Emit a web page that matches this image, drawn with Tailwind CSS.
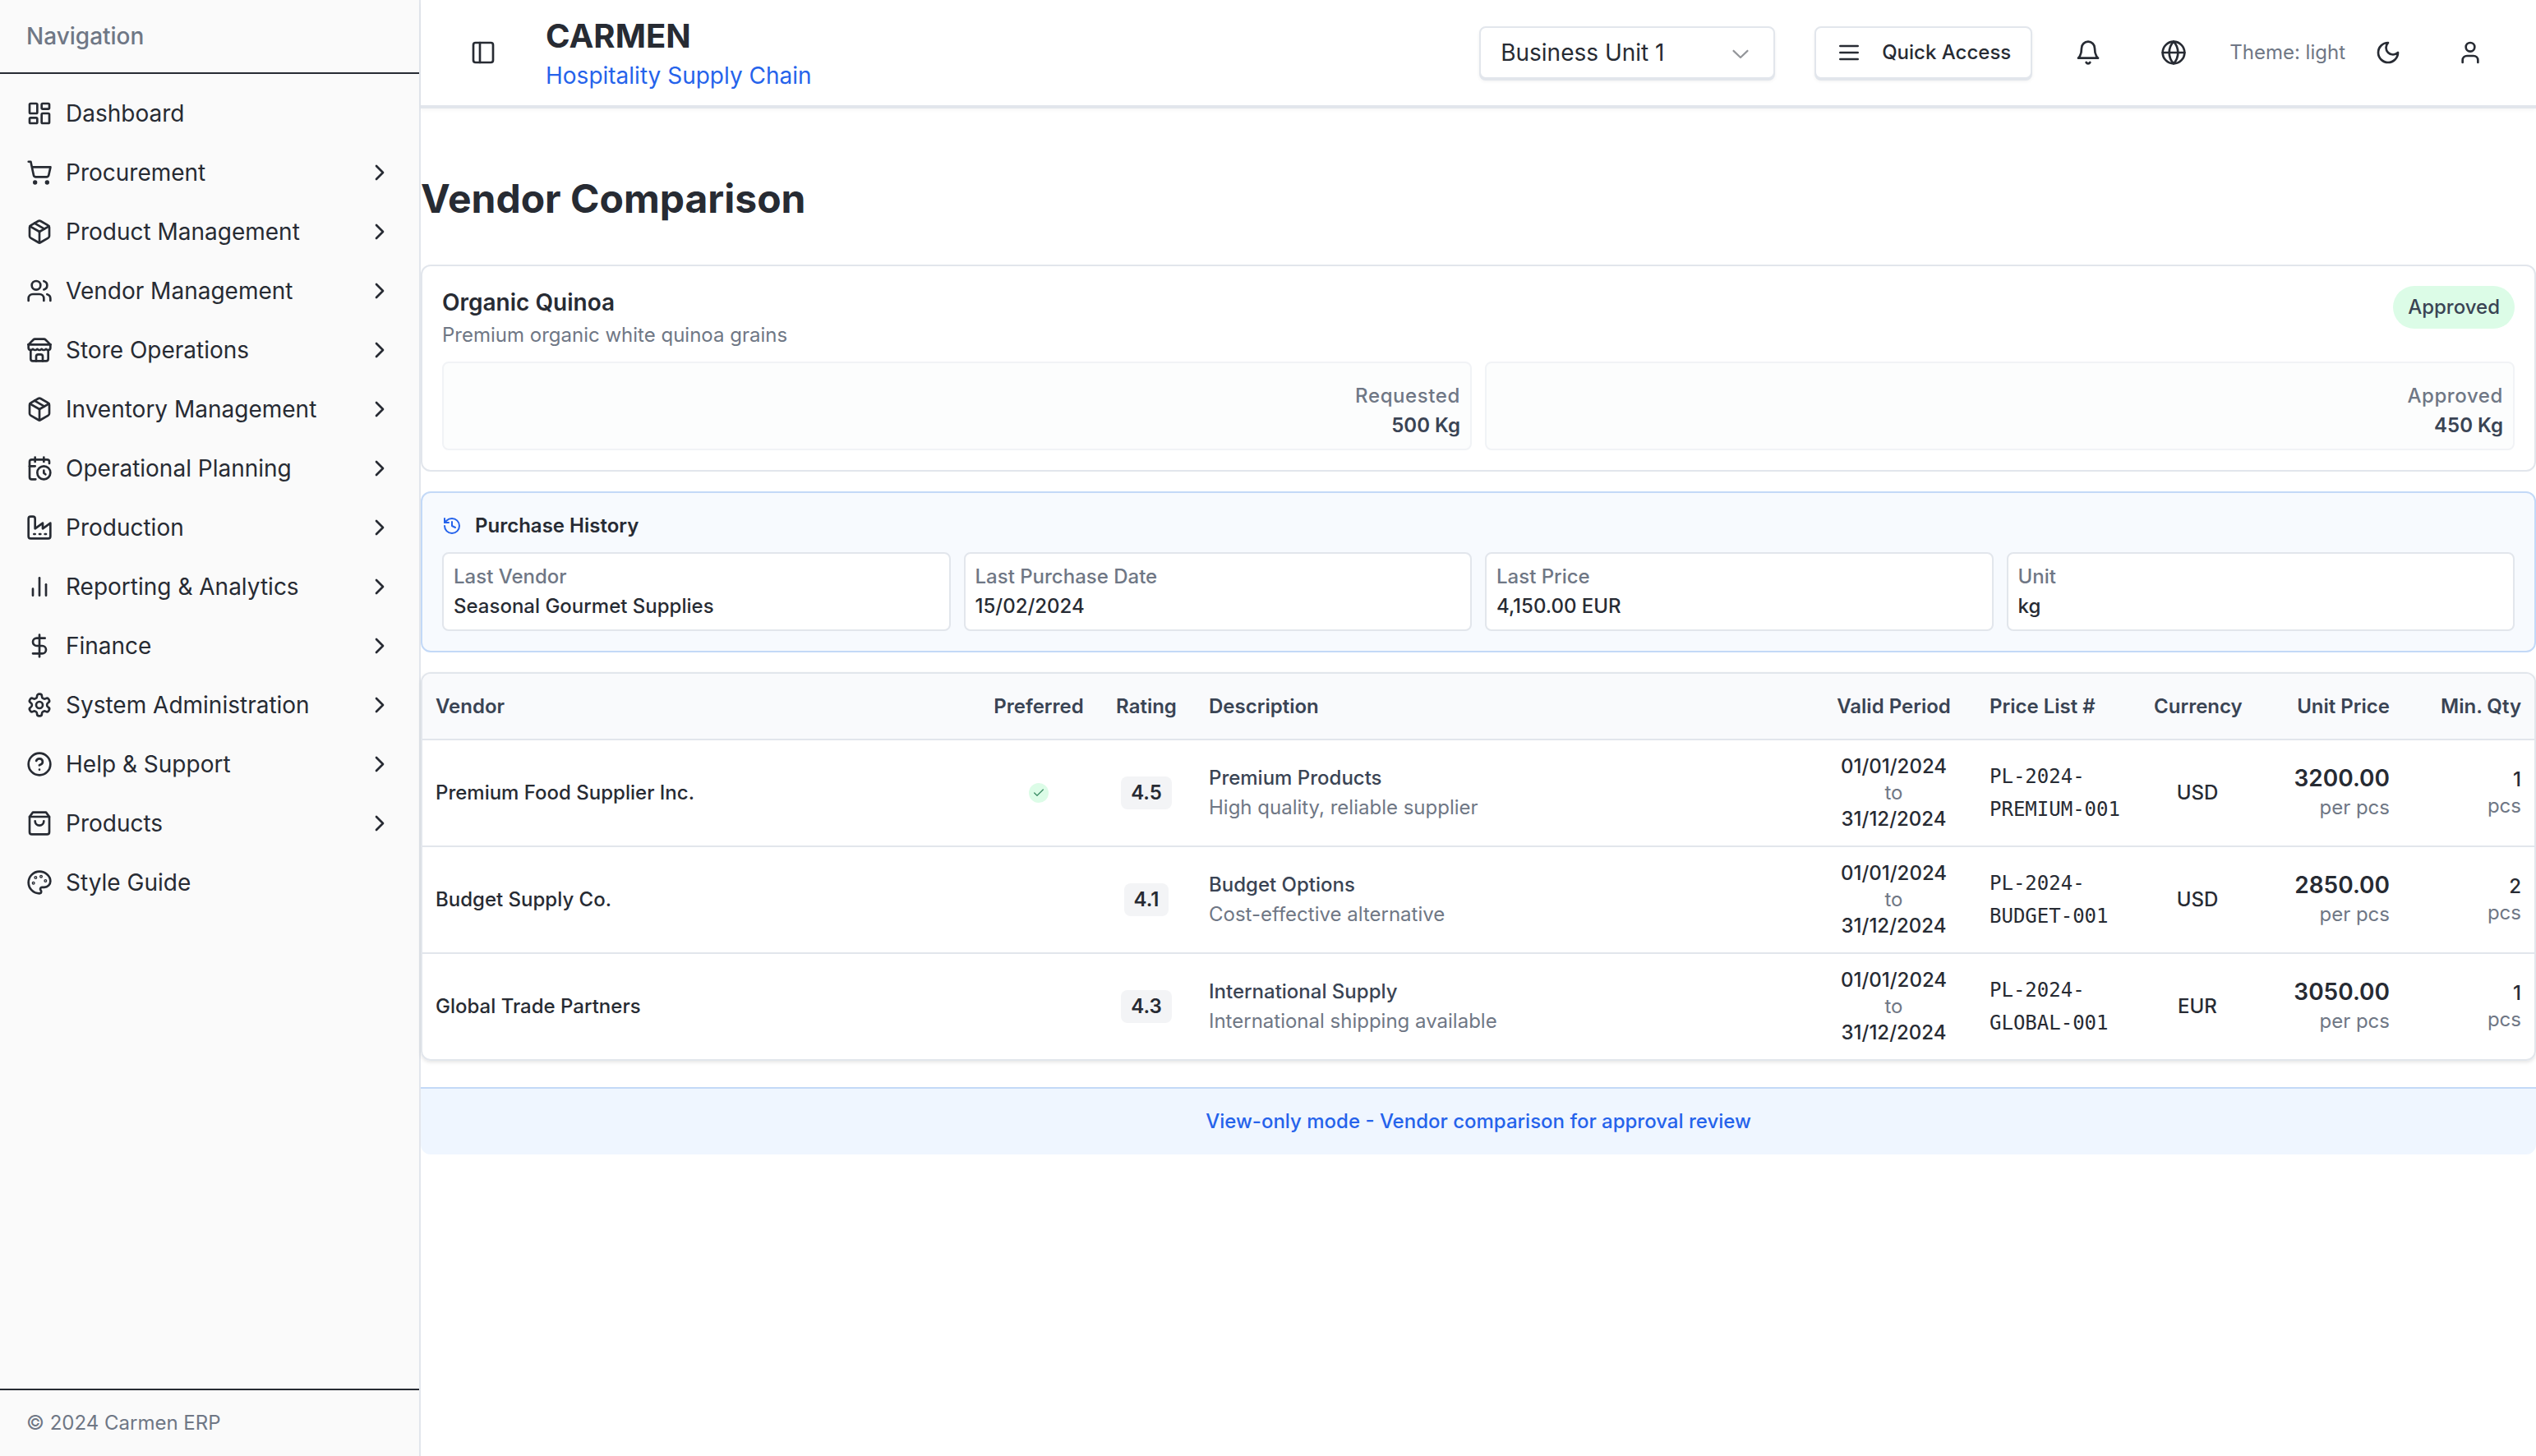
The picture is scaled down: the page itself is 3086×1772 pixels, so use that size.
<!DOCTYPE html>
<html lang="en">
<head>
<meta charset="utf-8">
<meta name="viewport" content="width=device-width, initial-scale=1">
<title>Carmen - Vendor Comparison</title>
<script src="https://cdn.jsdelivr.net/npm/@tailwindcss/browser@4"></script>
</head>
<body class="flex min-h-screen bg-white font-['Inter',sans-serif] text-[24px] leading-8 text-[#272b33] antialiased">
<svg class="hidden" aria-hidden="true">
  <symbol id="chevron" viewBox="0 0 24 24"><path d="m9 18 6-6-6-6"/></symbol>
  <symbol id="package" viewBox="0 0 24 24"><path d="m7.5 4.27 9 5.15"/><path d="M21 8a2 2 0 0 0-1-1.73l-7-4a2 2 0 0 0-2 0l-7 4A2 2 0 0 0 3 8v8a2 2 0 0 0 1 1.73l7 4a2 2 0 0 0 2 0l7-4A2 2 0 0 0 21 16Z"/><path d="m3.3 7 8.7 5 8.7-5"/><path d="M12 22V12"/></symbol>
</svg>

<aside class="flex w-[512px] shrink-0 flex-col border-r-2 border-[#e2e6ec] bg-[#fafafa] [&_svg]:size-8 [&_svg]:shrink-0 [&_svg]:fill-none [&_svg]:stroke-current [&_svg]:stroke-2">
  <div class="flex h-[90px] items-center border-b-2 border-[#272b33] px-8">
    <h2 class="text-[28px] font-medium text-[#6f7785]">Navigation</h2>
  </div>
  <nav aria-label="Main" class="grow pt-3 text-[28px] [&_a]:flex [&_a]:h-[72px] [&_a]:items-center [&_a]:gap-4 [&_a]:px-8 [&_span]:grow [&_svg]:[stroke-linecap:round] [&_svg]:[stroke-linejoin:round]">
    <a href="#"><svg viewBox="0 0 24 24"><rect width="7" height="9" x="3" y="3" rx="1"/><rect width="7" height="5" x="14" y="3" rx="1"/><rect width="7" height="9" x="14" y="12" rx="1"/><rect width="7" height="5" x="3" y="16" rx="1"/></svg><span>Dashboard</span></a>
    <a href="#"><svg viewBox="0 0 24 24"><circle cx="8" cy="21" r="1"/><circle cx="19" cy="21" r="1"/><path d="M2.05 2.05h2l2.66 12.42a2 2 0 0 0 2 1.58h9.78a2 2 0 0 0 1.95-1.57l1.65-7.43H5.12"/></svg><span>Procurement</span><svg><use href="#chevron"/></svg></a>
    <a href="#"><svg><use href="#package"/></svg><span>Product Management</span><svg><use href="#chevron"/></svg></a>
    <a href="#"><svg viewBox="0 0 24 24"><path d="M16 21v-2a4 4 0 0 0-4-4H6a4 4 0 0 0-4 4v2"/><circle cx="9" cy="7" r="4"/><path d="M22 21v-2a4 4 0 0 0-3-3.87"/><path d="M16 3.13a4 4 0 0 1 0 7.75"/></svg><span>Vendor Management</span><svg><use href="#chevron"/></svg></a>
    <a href="#"><svg viewBox="0 0 24 24"><path d="m2 7 4.41-4.41A2 2 0 0 1 7.83 2h8.34a2 2 0 0 1 1.42.59L22 7"/><path d="M4 12v8a2 2 0 0 0 2 2h12a2 2 0 0 0 2-2v-8"/><path d="M15 22v-4a2 2 0 0 0-2-2h-2a2 2 0 0 0-2 2v4"/><path d="M2 7h20"/><path d="M22 7v3a2 2 0 0 1-2 2a2.7 2.7 0 0 1-1.59-.63.7.7 0 0 0-.82 0A2.7 2.7 0 0 1 16 12a2.7 2.7 0 0 1-1.59-.63.7.7 0 0 0-.82 0A2.7 2.7 0 0 1 12 12a2.7 2.7 0 0 1-1.59-.63.7.7 0 0 0-.82 0A2.7 2.7 0 0 1 8 12a2.7 2.7 0 0 1-1.59-.63.7.7 0 0 0-.82 0A2.7 2.7 0 0 1 4 12a2 2 0 0 1-2-2V7"/></svg><span>Store Operations</span><svg><use href="#chevron"/></svg></a>
    <a href="#"><svg><use href="#package"/></svg><span>Inventory Management</span><svg><use href="#chevron"/></svg></a>
    <a href="#"><svg viewBox="0 0 24 24"><path d="M21 7.5V6a2 2 0 0 0-2-2H5a2 2 0 0 0-2 2v14a2 2 0 0 0 2 2h3.5"/><path d="M16 2v4"/><path d="M8 2v4"/><path d="M3 10h5"/><path d="M17.5 17.5 16 16.3V14"/><circle cx="16" cy="16" r="6"/></svg><span>Operational Planning</span><svg><use href="#chevron"/></svg></a>
    <a href="#"><svg viewBox="0 0 24 24"><path d="M2 20a2 2 0 0 0 2 2h16a2 2 0 0 0 2-2V8l-7 5V8l-7 5V4a2 2 0 0 0-2-2H4a2 2 0 0 0-2 2Z"/><path d="M17 18h1"/><path d="M12 18h1"/><path d="M7 18h1"/></svg><span>Production</span><svg><use href="#chevron"/></svg></a>
    <a href="#"><svg viewBox="0 0 24 24"><path d="M12 20V4"/><path d="M18 20V10"/><path d="M6 20v-6"/></svg><span>Reporting &amp; Analytics</span><svg><use href="#chevron"/></svg></a>
    <a href="#"><svg viewBox="0 0 24 24"><path d="M12 2v20"/><path d="M17 5H9.5a3.5 3.5 0 0 0 0 7h5a3.5 3.5 0 0 1 0 7H6"/></svg><span>Finance</span><svg><use href="#chevron"/></svg></a>
    <a href="#"><svg viewBox="0 0 24 24"><path d="M12.22 2h-.44a2 2 0 0 0-2 2v.18a2 2 0 0 1-1 1.73l-.43.25a2 2 0 0 1-2 0l-.15-.08a2 2 0 0 0-2.73.73l-.22.38a2 2 0 0 0 .73 2.73l.15.1a2 2 0 0 1 1 1.72v.51a2 2 0 0 1-1 1.74l-.15.09a2 2 0 0 0-.73 2.73l.22.38a2 2 0 0 0 2.73.73l.15-.08a2 2 0 0 1 2 0l.43.25a2 2 0 0 1 1 1.73V20a2 2 0 0 0 2 2h.44a2 2 0 0 0 2-2v-.18a2 2 0 0 1 1-1.73l.43-.25a2 2 0 0 1 2 0l.15.08a2 2 0 0 0 2.73-.73l.22-.39a2 2 0 0 0-.73-2.73l-.15-.08a2 2 0 0 1-1-1.74v-.5a2 2 0 0 1 1-1.74l.15-.09a2 2 0 0 0 .73-2.73l-.22-.38a2 2 0 0 0-2.73-.73l-.15.08a2 2 0 0 1-2 0l-.43-.25a2 2 0 0 1-1-1.73V4a2 2 0 0 0-2-2z"/><circle cx="12" cy="12" r="3"/></svg><span>System Administration</span><svg><use href="#chevron"/></svg></a>
    <a href="#"><svg viewBox="0 0 24 24"><circle cx="12" cy="12" r="10"/><path d="M9.09 9a3 3 0 0 1 5.83 1c0 2-3 3-3 3"/><path d="M12 17h.01"/></svg><span>Help &amp; Support</span><svg><use href="#chevron"/></svg></a>
    <a href="#"><svg viewBox="0 0 24 24"><path d="M6 2 3 6v14a2 2 0 0 0 2 2h14a2 2 0 0 0 2-2V6l-3-4Z"/><path d="M3 6h18"/><path d="M16 10a4 4 0 0 1-8 0"/></svg><span>Products</span><svg><use href="#chevron"/></svg></a>
    <a href="#"><svg viewBox="0 0 24 24"><circle cx="13.5" cy="6.5" r=".5"/><circle cx="17.5" cy="10.5" r=".5"/><circle cx="8.5" cy="7.5" r=".5"/><circle cx="6.5" cy="12.5" r=".5"/><path d="M12 2C6.5 2 2 6.5 2 12s4.5 10 10 10c.926 0 1.648-.746 1.648-1.688 0-.437-.18-.835-.437-1.125-.29-.289-.438-.652-.438-1.125a1.64 1.64 0 0 1 1.668-1.668h1.996c3.051 0 5.555-2.503 5.555-5.554C21.965 6.012 17.461 2 12 2z"/></svg><span>Style Guide</span></a>
  </nav>
  <footer class="border-t-2 border-[#272b33] px-8 py-6 text-[#6f7785]">© 2024 Carmen ERP</footer>
</aside>

<div class="min-w-0 grow">
  <header class="flex items-center justify-between border-b-2 border-[#e2e6ec] px-12 shadow-[0_2px_0_#e2e6ec,0_4px_4px_rgba(0,0,0,0.04)] [&_svg]:size-8 [&_svg]:shrink-0">
    <div class="flex h-32 items-center gap-12">
      <button type="button" aria-label="Toggle sidebar" class="flex size-14 items-center justify-center"><svg viewBox="0 0 24 24" fill="none" stroke="currentColor" stroke-width="2" stroke-linecap="round" stroke-linejoin="round"><rect width="18" height="18" x="3" y="3" rx="2"/><path d="M9 3v18"/></svg></button>
      <a href="#" class="block pt-2">
        <span class="block text-[40px] leading-[48px] font-bold">CARMEN</span>
        <span class="block text-[28px] leading-[48px] text-[#2563eb]">Hospitality Supply Chain</span>
      </a>
    </div>
    <div class="flex items-center gap-8">
      <div class="mr-4 grid w-[360px] items-center">
        <select aria-label="Business unit" class="col-start-1 row-start-1 h-16 appearance-none rounded-lg border-2 border-[#e2e6ec] bg-white px-6 text-[28px] leading-8 shadow-[0_2px_0_#e2e6ec,0_3px_4px_rgba(0,0,0,0.06)]"><option>Business Unit 1</option></select>
        <svg class="pointer-events-none col-start-1 row-start-1 mr-[26px] justify-self-end text-[#272b33]/50" viewBox="0 0 15 15" fill="currentColor"><path fill-rule="evenodd" clip-rule="evenodd" d="M3.13523 6.15803C3.3241 5.95657 3.64052 5.94637 3.84197 6.13523L7.5 9.56464L11.158 6.13523C11.3595 5.94637 11.6759 5.95657 11.8648 6.15803C12.0536 6.35949 12.0434 6.67591 11.842 6.86477L7.84197 10.6148C7.64964 10.7951 7.35036 10.7951 7.15803 10.6148L3.15803 6.86477C2.95657 6.67591 2.94637 6.35949 3.13523 6.15803Z"/></svg>
      </div>
      <button type="button" class="flex h-16 items-center gap-6 rounded-lg border-2 border-[#e2e6ec] bg-white px-6 font-medium shadow-[0_2px_0_#e2e6ec,0_3px_4px_rgba(0,0,0,0.06)]"><svg viewBox="0 0 24 24" fill="none" stroke="currentColor" stroke-width="2" stroke-linecap="round"><path d="M4 12h16M4 6h16M4 18h16"/></svg>Quick Access</button>
      <button type="button" aria-label="Notifications" class="flex size-[72px] items-center justify-center"><svg viewBox="0 0 24 24" fill="none" stroke="currentColor" stroke-width="2" stroke-linecap="round" stroke-linejoin="round"><path d="M6 8a6 6 0 0 1 12 0c0 7 3 9 3 9H3s3-2 3-9"/><path d="M10.3 21a1.94 1.94 0 0 0 3.4 0"/></svg></button>
      <button type="button" aria-label="Language" class="flex size-[72px] items-center justify-center"><svg viewBox="0 0 24 24" fill="none" stroke="currentColor" stroke-width="2" stroke-linecap="round" stroke-linejoin="round"><circle cx="12" cy="12" r="10"/><path d="M12 2a14.5 14.5 0 0 0 0 20 14.5 14.5 0 0 0 0-20"/><path d="M2 12h20"/></svg></button>
      <div class="flex items-center gap-4">
        <span class="text-[#6f7785]">Theme: light</span>
        <button type="button" aria-label="Toggle theme" class="flex size-[72px] items-center justify-center"><svg viewBox="0 0 24 24" fill="none" stroke="currentColor" stroke-width="2" stroke-linecap="round" stroke-linejoin="round"><path d="M12 3a6 6 0 0 0 9 9 9 9 0 1 1-9-9Z"/></svg></button>
      </div>
      <button type="button" aria-label="Account" class="flex size-16 items-center justify-center"><svg viewBox="0 0 24 24" fill="none" stroke="currentColor" stroke-width="2" stroke-linecap="round" stroke-linejoin="round"><path d="M19 21v-2a4 4 0 0 0-4-4H9a4 4 0 0 0-4 4v2"/><circle cx="12" cy="7" r="4"/></svg></button>
    </div>
  </header>

  <main class="flex flex-col gap-6 pt-20">
    <h1 class="mb-6 text-[48px] leading-16 font-bold">Vendor Comparison</h1>

    <section class="rounded-xl border-2 border-[#e2e6ec] p-6">
      <div class="flex items-start justify-between">
        <div>
          <h2 class="text-[28px] leading-10 font-semibold">Organic Quinoa</h2>
          <p class="leading-10 text-[#6f7785]">Premium organic white quinoa grains</p>
        </div>
        <span class="rounded-full bg-[#dcfce7] px-[18px] py-[10px] font-medium text-[#3a4454]">Approved</span>
      </div>
      <dl class="mt-3 grid grid-cols-2 gap-4 text-right [&_div]:flex [&_div]:flex-col [&_div]:gap-1 [&_div]:rounded-lg [&_div]:border-2 [&_div]:border-[#f1f3f6] [&_div]:bg-[#fcfdfd] [&_div]:px-3 [&_div]:pt-6 [&_div]:pb-3 [&_dt]:font-medium [&_dt]:tracking-wide [&_dt]:text-[#6f7785] [&_dd]:font-semibold [&_dd]:text-[#3a4454]">
        <div><dt>Requested</dt><dd>500 Kg</dd></div>
        <div><dt>Approved</dt><dd>450 Kg</dd></div>
      </dl>
    </section>

    <section class="rounded-xl border-2 border-[#c3d9f7] bg-[#f7fafe] p-6">
      <h2 class="flex items-center gap-4 font-semibold"><svg class="size-6 text-[#2563eb]" viewBox="0 0 24 24" fill="none" stroke="currentColor" stroke-width="2" stroke-linecap="round" stroke-linejoin="round"><path d="M3 12a9 9 0 1 0 9-9 9.75 9.75 0 0 0-6.74 2.74L3 8"/><path d="M3 3v5h5"/><path d="M12 7v5l4 2"/></svg>Purchase History</h2>
      <dl class="mt-4 grid grid-cols-4 gap-4 [&_dd]:font-medium [&_div]:flex [&_div]:flex-col [&_div]:gap-1 [&_div]:rounded-lg [&_div]:border-2 [&_div]:border-[#e2e6ec] [&_div]:bg-white [&_div]:p-3 [&_dt]:font-medium [&_dt]:text-[#6f7785]">
        <div><dt>Last Vendor</dt><dd>Seasonal Gourmet Supplies</dd></div>
        <div><dt>Last Purchase Date</dt><dd>15/02/2024</dd></div>
        <div><dt>Last Price</dt><dd>4,150.00 EUR</dd></div>
        <div><dt>Unit</dt><dd>kg</dd></div>
      </dl>
    </section>

    <div class="overflow-hidden rounded-xl border-2 border-[#e2e6ec] shadow-[0_2px_4px_rgba(0,0,0,0.1)]">
      <table class="w-full table-fixed border-separate border-spacing-0 font-medium [&_td]:px-4 [&_td]:py-4 [&_th]:px-4 [&_th]:font-semibold [&_tr:not(:last-child)>td]:border-b-2 [&_td]:border-[#e2e6ec]">
        <colgroup><col class="w-[26.42%]"><col class="w-[142px]"><col class="w-[120px]"><col><col class="w-[201px]"><col class="w-[200px]"><col class="w-[138px]"><col class="w-[181px]"><col class="w-[160px]"></colgroup>
        <thead class="bg-[#f9fafc] text-[#3a4454] [&_th]:h-[81px] [&_th]:border-b-2 [&_th]:border-[#e2e6ec]">
          <tr><th class="text-left">Vendor</th><th>Preferred</th><th>Rating</th><th class="text-left">Description</th><th>Valid Period</th><th class="text-left">Price List #</th><th>Currency</th><th class="text-right">Unit Price</th><th class="text-right">Min. Qty</th></tr>
        </thead>
        <tbody>
          <tr>
            <td>Premium Food Supplier Inc.</td>
            <td><span role="img" aria-label="Preferred" class="mx-auto flex size-6 items-center justify-center rounded-full bg-[#dcfce7] text-[#3f8f68]"><svg class="size-4" viewBox="0 0 24 24" fill="none" stroke="currentColor" stroke-width="2" stroke-linecap="round" stroke-linejoin="round"><path d="M20 6 9 17l-5-5"/></svg></span></td>
            <td><span class="mx-auto block w-fit rounded-lg bg-[#f3f4f6] px-3 py-1 font-semibold">4.5</span></td>
            <td><p class="leading-9 text-[#3a4454]">Premium Products</p><p class="leading-9 font-normal text-[#6f7785]">High quality, reliable supplier</p></td>
            <td class="text-center"><p>01/01/2024</p><p class="font-normal text-[#6f7785]">to</p><p>31/12/2024</p></td>
            <td class="font-['DejaVu_Sans_Mono',monospace] text-[24px] leading-10 font-normal">PL-2024-PREMIUM-001</td>
            <td class="text-center">USD</td>
            <td class="text-right"><p class="text-[28px] leading-9 font-semibold">3200.00</p><p class="leading-9 font-normal text-[#6f7785]">per pcs</p></td>
            <td class="text-right"><p>1</p><p class="font-normal text-[#6f7785]">pcs</p></td>
          </tr>
          <tr>
            <td>Budget Supply Co.</td>
            <td></td>
            <td><span class="mx-auto block w-fit rounded-lg bg-[#f3f4f6] px-3 py-1 font-semibold">4.1</span></td>
            <td><p class="leading-9 text-[#3a4454]">Budget Options</p><p class="leading-9 font-normal text-[#6f7785]">Cost-effective alternative</p></td>
            <td class="text-center"><p>01/01/2024</p><p class="font-normal text-[#6f7785]">to</p><p>31/12/2024</p></td>
            <td class="font-['DejaVu_Sans_Mono',monospace] text-[24px] leading-10 font-normal">PL-2024-BUDGET-001</td>
            <td class="text-center">USD</td>
            <td class="text-right"><p class="text-[28px] leading-9 font-semibold">2850.00</p><p class="leading-9 font-normal text-[#6f7785]">per pcs</p></td>
            <td class="text-right"><p>2</p><p class="font-normal text-[#6f7785]">pcs</p></td>
          </tr>
          <tr>
            <td>Global Trade Partners</td>
            <td></td>
            <td><span class="mx-auto block w-fit rounded-lg bg-[#f3f4f6] px-3 py-1 font-semibold">4.3</span></td>
            <td><p class="leading-9 text-[#3a4454]">International Supply</p><p class="leading-9 font-normal text-[#6f7785]">International shipping available</p></td>
            <td class="text-center"><p>01/01/2024</p><p class="font-normal text-[#6f7785]">to</p><p>31/12/2024</p></td>
            <td class="font-['DejaVu_Sans_Mono',monospace] text-[24px] leading-10 font-normal">PL-2024-GLOBAL-001</td>
            <td class="text-center">EUR</td>
            <td class="text-right"><p class="text-[28px] leading-9 font-semibold">3050.00</p><p class="leading-9 font-normal text-[#6f7785]">per pcs</p></td>
            <td class="text-right"><p>1</p><p class="font-normal text-[#6f7785]">pcs</p></td>
          </tr>
        </tbody>
      </table>
    </div>

    <p class="mt-2 rounded-b-xl border-t-2 border-[#c3d9f7] bg-[#eff6ff] py-6 text-center font-medium text-[#2563eb]">View-only mode - Vendor comparison for approval review</p>
  </main>
</div>
</body>
</html>
